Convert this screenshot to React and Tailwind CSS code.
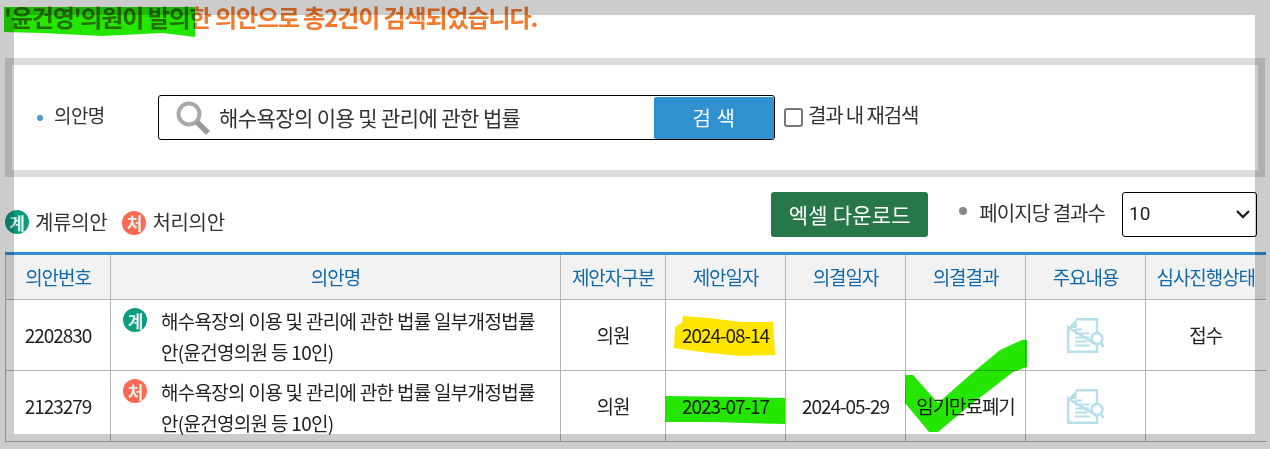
import React from "react";

const FONT = { fontFamily: '"Noto Sans CJK KR", "Noto Sans", sans-serif' };

function Badge({ kind }) {
  const red = kind === "처";
  return (
    <span className={`inline-flex h-[24px] w-[24px] shrink-0 items-center justify-center rounded-full text-[17px] leading-none font-bold text-[#dff3ee] ${red ? "bg-[#fb6a55]" : "bg-[#0e9c80]"}`}>
      {kind}
    </span>
  );
}

function DocIcon() {
  return (
    <svg width="37" height="35" viewBox="0 0 37 35" fill="none" stroke="#b5dfea" strokeWidth="2.4" className="mx-auto">
      <path d="M9 1.2H30V14M30 27V33.8H1.2V9.5Z" />
      <path d="M2 9.5L9 9.5V2Z" fill="#b5dfea" strokeWidth="1" />
      <path d="M8 11.5H15M8 15.5H22M8 19.5H22M8 23.5H20M8 27.5H23" strokeWidth="1.8" />
      <circle cx="30" cy="20.5" r="5.5" strokeWidth="2.4" />
      <path d="M34 25L36.5 29" strokeWidth="2.6" />
    </svg>
  );
}

const headers = [
  ["의안번호", "w-[105px]"],
  ["의안명", "w-[450px]"],
  ["제안자구분", "w-[105px]"],
  ["제안일자", "w-[120px]"],
  ["의결일자", "w-[120px]"],
  ["의결결과", "w-[120px]"],
  ["주요내용", "w-[120px]"],
  ["심사진행상태", "w-[120px] border-r-0"],
];

const rows = [
  { no: "2202830", kind: "계", who: "의원", date: "2024-08-14", end: "", result: "", state: "접수" },
  { no: "2123279", kind: "처", who: "의원", date: "2023-07-17", end: "2024-05-29", result: "임기만료폐기", state: "" },
];

const cell = "border border-[#b4b4b4] text-center text-[19px] tracking-[-1.05px] text-[#222]";

export default function App() {
  return (
    <div className="relative h-[449px] w-[1270px] overflow-hidden bg-white" style={FONT}>
      <div className="flex h-[58px] items-start pl-[4px] text-[24px] leading-[34px] font-bold tracking-[-1.1px] whitespace-nowrap text-[#f47a2e]">
        '윤건영'의원이 발의한 의안으로 총2건이 검색되었습니다.
      </div>

      <div className="ml-[5px] flex h-[119px] w-[1260px] items-center border-[7px] border-[#dcdcdc] bg-white">
        <span className="ml-[25px] h-[6px] w-[6px] rounded-full bg-[#4a96d0]" />
        <span className="ml-[11px] mb-[5px] w-[53px] text-[19px] tracking-[-0.6px] whitespace-nowrap text-[#333]">의안명</span>
        <div className="ml-[51px] flex h-[45px] w-[617px] items-center rounded-[3px] border border-black">
          <svg width="36" height="36" viewBox="0 0 36 36" fill="none" className="ml-[16px] shrink-0">
            <circle cx="14" cy="14" r="10.5" stroke="#a8a8a8" strokeWidth="4" />
            <path d="M22 22L33 33" stroke="#9a9a9a" strokeWidth="5.5" />
          </svg>
          <span className="ml-[8px] w-[435px] text-[21px] tracking-[-0.6px] whitespace-nowrap text-[#333]">해수욕장의 이용 및 관리에 관한 법률</span>
          <button className="h-[42px] w-[120px] rounded-[2px] bg-[#3190d0] text-[20px] tracking-[0.5px] text-white">검 색</button>
        </div>
        <span className="ml-[9px] mb-[1px] h-[19px] w-[19px] rounded-[3px] border-2 border-[#777] bg-white" />
        <span className="ml-[5px] mb-[5px] text-[20px] tracking-[-1.15px] whitespace-nowrap text-[#333]">결과 내 재검색</span>
      </div>

      <div className="flex h-[75px] items-start pl-[5px] pt-[15px]">
        <div className="mt-[15px] flex items-center text-[20px] tracking-[-0.3px] whitespace-nowrap text-[#333]">
          <Badge kind="계" />
          <span className="ml-[6px]">계류의안</span>
          <span className="ml-[15px]"><Badge kind="처" /></span>
          <span className="ml-[6px]">처리의안</span>
        </div>
        <div className="ml-auto mr-[13px] flex items-start">
          <button className="h-[45px] w-[157px] rounded-[3px] bg-[#277749] text-[21px] tracking-[0.2px] whitespace-nowrap text-white">엑셀 다운로드</button>
          <span className="ml-[31px] mt-[15px] h-[8px] w-[8px] rounded-full bg-[#888]" />
          <span className="ml-[12px] mt-[6px] text-[20px] tracking-[-0.95px] whitespace-nowrap text-[#333]">페이지당 결과수</span>
          <div className="ml-[17px] flex h-[45px] w-[135px] items-center justify-between rounded-[3px] border border-black px-[6px] text-[19px] text-[#222]" style={{ fontFamily: '"Roboto", sans-serif' }}>
            10
            <svg width="14" height="9" viewBox="0 0 14 9" fill="none" stroke="#222" strokeWidth="2.4"><path d="M1 1L7 7L13 1" /></svg>
          </div>
        </div>
      </div>

      <table className="ml-[5px] w-[1260px] table-fixed border-collapse border-t-[3px] border-t-[#3190d0]">
        <thead>
          <tr className="h-[46px]">
            {headers.map(([h, w]) => (
              <th key={h} className={`${cell} ${w} border-t-0 bg-[#f2f2f2] font-normal whitespace-nowrap text-[#1268ab]`}>{h}</th>
            ))}
          </tr>
        </thead>
        <tbody>
          {rows.map((r) => (
            <tr key={r.no} className="h-[71px]">
              <td className={cell}>{r.no}</td>
              <td className={`${cell} text-left`}>
                <div className="flex items-start pl-[12px]">
                  <span className="mt-[2px]"><Badge kind={r.kind} /></span>
                  <span className="ml-[14px] mt-[1px] w-[378px] leading-[31px] tracking-[-0.7px]">해수욕장의 이용 및 관리에 관한 법률 일부개정법률안(윤건영의원 등 10인)</span>
                </div>
              </td>
              <td className={cell}>{r.who}</td>
              <td className={cell}>{r.date}</td>
              <td className={cell}>{r.end}</td>
              <td className={cell}>{r.result}</td>
              <td className={cell}><DocIcon /></td>
              <td className={`${cell} border-r-0`}>{r.state}</td>
            </tr>
          ))}
        </tbody>
      </table>

      {/* 스크린샷 위에 덧그린 형광펜 표시 */}
      <svg className="pointer-events-none absolute top-0 left-0 mix-blend-multiply" width="1270" height="449" viewBox="0 0 1270 449">
        <path d="M4 7H195V37L163 33L102 36L41 33L4 32Z" fill="#25e600" />
        <path d="M683 316L709 318L741 322H773L775 355L741 356L709 353L674 348L675 327L682 323Z" fill="#ffe600" />
        <path d="M665.5 396L741 397L785 398V424L746 423L714 422H665.5Z" fill="#25e600" />
        <path d="M905.5 375H913L938 403L970 375L1000 350L1022 340H1027V367L1013 372L968 407L938 432H929L905 403Z" fill="#25e600" />
      </svg>

      {/* 바깥쪽 회색 틀 */}
      <div className="pointer-events-none absolute top-0 left-0 h-[449px] w-[1270px] border-t-[15px] border-r-[15px] border-b-[15px] border-l-[14px] border-black/20" />
    </div>
  );
}
